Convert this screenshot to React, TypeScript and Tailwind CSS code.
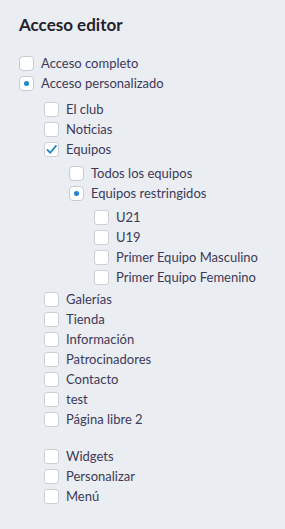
import React from "react";

type Kind = "check" | "radio";

interface Item {
  label: string;
  kind?: Kind;
  checked?: boolean;
}

const Box: React.FC<{ kind: Kind; checked?: boolean; big?: boolean }> = ({ kind, checked, big }) => {
  if (kind === "radio") {
    return (
      <span className="flex h-[15px] w-[15px] shrink-0 items-center justify-center rounded-[4px] border border-[#c6cad1] bg-white">
        {checked && <span className="h-[5px] w-[5px] rounded-full bg-[#1f86c9]" />}
      </span>
    );
  }
  return (
    <span
      className={`flex h-[15px] w-[15px] shrink-0 items-center justify-center border border-[#cdd0d6] bg-white ${
        big ? "rounded-[4px]" : "rounded-[3px]"
      }`}
    >
      {checked && (
        <svg viewBox="0 0 16 16" className="h-[13px] w-[13px]">
          <path d="M3 8.5 L6.5 12 L13.5 3.5" fill="none" stroke="#1f86c9" strokeWidth="2.2" strokeLinecap="round" strokeLinejoin="round" />
        </svg>
      )}
    </span>
  );
};

const Row: React.FC<{ item: Item; big?: boolean }> = ({ item, big }) => (
  <label className="flex h-5 items-center gap-[7px]">
    <Box kind={item.kind || "check"} checked={item.checked} big={big} />
    <span className="whitespace-nowrap text-[13px] leading-5 text-[#3d3a5a]">{item.label}</span>
  </label>
);

const equipos: Item[] = [
  { label: "U21" },
  { label: "U19" },
  { label: "Primer Equipo Masculino" },
  { label: "Primer Equipo Femenino" },
];

const pages: Item[] = [
  { label: "Galerías" },
  { label: "Tienda" },
  { label: "Información" },
  { label: "Patrocinadores" },
  { label: "Contacto" },
  { label: "test" },
  { label: "Página libre 2" },
];

const extras: Item[] = [{ label: "Widgets" }, { label: "Personalizar" }, { label: "Menú" }];

export default function App() {
  return (
    <div className="min-h-[529px] w-[285px] bg-[#eaedf1] px-[19px] pt-[15px]" style={{ fontFamily: "Lato, 'Noto Sans', sans-serif" }}>
      <h2 className="text-[17px] font-bold leading-5 text-[#23222e]">Acceso editor</h2>

      <div className="mt-[18px] flex flex-col">
        <Row item={{ label: "Acceso completo", kind: "radio" }} big />
        <Row item={{ label: "Acceso personalizado", kind: "radio", checked: true }} big />
      </div>

      <div className="ml-[25px] mt-[6px] flex flex-col">
        <Row item={{ label: "El club" }} />
        <Row item={{ label: "Noticias" }} />
        <Row item={{ label: "Equipos", checked: true }} />

        <div className="ml-[25px] mt-[4px] flex flex-col">
          <Row item={{ label: "Todos los equipos", kind: "radio" }} />
          <Row item={{ label: "Equipos restringidos", kind: "radio", checked: true }} />
          <div className="ml-[25px] mt-[4px] flex flex-col">
            {equipos.map((e) => (
              <Row key={e.label} item={e} />
            ))}
          </div>
        </div>

        <div className="mt-[2px] flex flex-col">
          {pages.map((p) => (
            <Row key={p.label} item={p} />
          ))}
        </div>

        <div className="mt-[17px] flex flex-col">
          {extras.map((p) => (
            <Row key={p.label} item={p} />
          ))}
        </div>
      </div>
    </div>
  );
}
